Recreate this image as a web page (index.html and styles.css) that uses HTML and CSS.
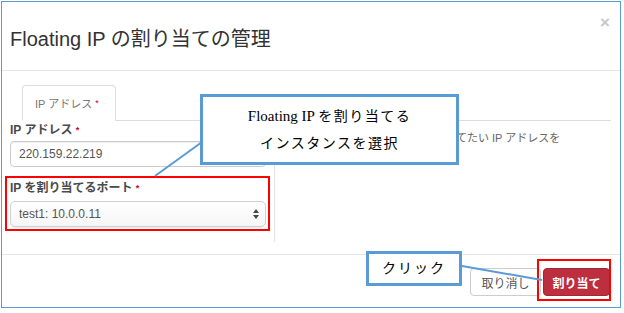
FILE: index.html
```html
<!DOCTYPE html>
<html lang="ja">
<head>
    <meta charset="UTF-8">
    <meta name="viewport" content="width=device-width, initial-scale=1.0">
    <title>Floating IP の割り当ての管理</title>
    <link rel="stylesheet" href="styles.css">
</head>
<body>
    <div class="page">
        <div class="modal">
            <div class="modal-header">
                <h3 class="modal-title">Floating IP の割り当ての管理</h3>
                <span class="close">×</span>
            </div>

            <div class="modal-body">
                <ul class="tabs">
                    <li class="tab">IP アドレス <span class="req">*</span></li>
                </ul>
                <div class="tab-content">
                    <div class="left">
                        <label class="label">IP アドレス <span class="req">*</span></label>
                        <div class="input">220.159.22.219</div>
                        <label class="label label-port">IP を割り当てるポート <span class="req">*</span></label>
                        <div class="select">
                            <span>test1: 10.0.0.11</span>
                            <svg class="arrows" width="6" height="10" viewBox="0 0 6 10">
                                <path d="M3 0 L6 4 L0 4 Z" fill="#444"/>
                                <path d="M0 6 L6 6 L3 10 Z" fill="#444"/>
                            </svg>
                        </div>
                    </div>
                    <div class="right">
                        <!-- the start of this help text is hidden under the callout -->
                        <p class="help">てたい IP アドレスを</p>
                    </div>
                </div>
            </div>

            <div class="modal-footer">
                <button class="btn btn-cancel">取り消し</button>
                <button class="btn btn-submit">割り当て</button>
            </div>
        </div>

        <!-- annotations drawn on top of the screenshot -->
        <div class="mark mark-port"></div>
        <div class="mark mark-submit"></div>
        <svg class="leaders" width="624" height="313" viewBox="0 0 624 313">
            <line x1="155" y1="176" x2="202" y2="142" stroke="#5b9bd5" stroke-width="2"/>
            <line x1="462" y1="266" x2="542" y2="280" stroke="#5b9bd5" stroke-width="2"/>
        </svg>
        <div class="callout callout-select">Floating IP <span class="ja">を割り当てる</span><br><span class="ja">インスタンスを選択</span></div>
        <div class="callout callout-click"><span class="ja">クリック</span></div>
    </div>
</body>
</html>
```

FILE: styles.css
```css
* {
    box-sizing: border-box;
}

body {
    margin: 0;
    padding: 0;
    background: #fff;
    font-family: "Liberation Sans", "Noto Sans CJK JP", sans-serif;
    color: #333;
}

.page {
    position: relative;
    width: 624px;
    height: 313px;
    padding: 1px 0 0 1px;
}

.modal {
    width: 620px;
    height: 307px;
    border: 1px solid #5b9bd5;
    background: #fff;
    display: flex;
    flex-direction: column;
}

.modal-header {
    height: 69px;
    border-bottom: 1px solid #e5e5e5;
    display: flex;
    align-items: center;
    justify-content: space-between;
    padding: 2px 10px 0 8px;
}

.modal-title {
    margin: 0;
    font-size: 20px;
    font-weight: normal;
    color: #333;
}

.close {
    font-size: 17px;
    font-weight: bold;
    color: #c8c8c8;
    margin-top: -28px;
}

.modal-body {
    height: 183px;
    padding-top: 14px;
}

.tabs {
    list-style: none;
    margin: 0 9px 0 20px;
    padding: 0;
    display: flex;
    border-bottom: 1px solid #ddd;
}

.tab {
    height: 36px;
    margin-bottom: -1px;
    padding: 0 12px;
    border: 1px solid #ddd;
    border-bottom-color: #fff;
    border-radius: 4px 4px 0 0;
    background: #fff;
    font-size: 11px;
    color: #777;
    display: flex;
    align-items: center;
    gap: 3px;
    width: 94px;
}

.req {
    color: #d0021b;
    font-size: 9px;
    vertical-align: top;
}

.tab-content {
    display: flex;
}

.left {
    width: 273px;
    height: 121px;
    border-right: 1px solid #e5e5e5;
    padding: 1px 8px 0 8px;
}

.label {
    display: block;
    height: 16px;
    line-height: 16px;
    font-size: 12px;
    font-weight: bold;
    color: #4a4a4a;
    margin-bottom: 3px;
}

.label-port {
    margin-top: 13px;
    margin-bottom: 5px;
}

.input {
    height: 26px;
    border: 1px solid #ccc;
    border-radius: 4px;
    box-shadow: inset 0 1px 1px rgba(0, 0, 0, 0.075);
    padding: 0 8px;
    font-size: 12px;
    line-height: 24px;
    color: #555;
}

.select {
    height: 26px;
    border: 1px solid #cfcfcf;
    border-radius: 5px;
    background: linear-gradient(#fff, #f5f5f5);
    box-shadow: 0 1px 1px rgba(0, 0, 0, 0.08);
    padding: 0 6px 0 8px;
    display: flex;
    align-items: center;
    justify-content: space-between;
    font-size: 12px;
    color: #555;
}

.right {
    flex: 1;
    padding: 9px 10px 0 181px;
}

.help {
    margin: 0;
    font-size: 11px;
    line-height: 16px;
    color: #666;
}

.modal-footer {
    border-top: 1px solid #e5e5e5;
    flex: 1;
    display: flex;
    justify-content: flex-end;
    align-items: flex-start;
    gap: 2px;
    padding: 13px 10px 0 0;
}

.btn {
    height: 28px;
    border-radius: 4px;
    font-family: "Liberation Sans", "Noto Sans CJK JP", sans-serif;
    font-size: 12px;
    padding: 0;
    cursor: pointer;
}

.btn-cancel {
    width: 71px;
    background: #fff;
    border: 1px solid #ccc;
    color: #555;
}

.btn-submit {
    width: 67px;
    background: #bd2f3e;
    border: 1px solid #a52534;
    color: #fff;
    font-weight: bold;
}

.mark {
    position: absolute;
    border: 2px solid #f00;
}

.mark-port {
    left: 5px;
    top: 176px;
    width: 265px;
    height: 55px;
}

.mark-submit {
    left: 537px;
    top: 259px;
    width: 74px;
    height: 42px;
}

.leaders {
    position: absolute;
    left: 0;
    top: 0;
}

.callout {
    position: absolute;
    border: 3px solid #5b9bd5;
    background: #fff;
    color: #000;
    text-align: center;
    font-family: "Liberation Serif", "Noto Sans CJK JP", serif;
    font-size: 15px;
}

.callout .ja {
    font-size: 14px;
    letter-spacing: 1.5px;
}

.callout-select {
    left: 200px;
    top: 94px;
    width: 259px;
    height: 71px;
    padding-top: 6px;
    line-height: 26px;
}

.callout-click {
    left: 366px;
    top: 251px;
    width: 96px;
    height: 35px;
    line-height: 29px;
}

.callout-click .ja {
    letter-spacing: 2px;
}
```
